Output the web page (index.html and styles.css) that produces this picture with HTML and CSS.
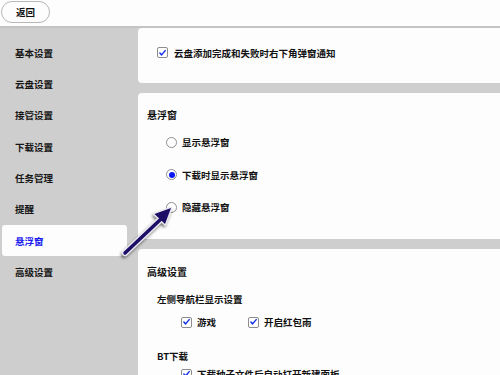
FILE: index.html
```html
<!DOCTYPE html>
<html lang="zh-CN">
<head>
<meta charset="utf-8">
<link rel="stylesheet" href="styles.css">
</head>
<body>
<header class="topbar">
  <button class="back-btn">返回</button>
</header>
<div class="main">
  <nav class="sidebar">
    <div class="nav-item">基本设置</div>
    <div class="nav-item">云盘设置</div>
    <div class="nav-item">接管设置</div>
    <div class="nav-item">下载设置</div>
    <div class="nav-item">任务管理</div>
    <div class="nav-item">提醒</div>
    <div class="nav-item active">悬浮窗</div>
    <div class="nav-item">高级设置</div>
  </nav>
  <section class="content">
    <div class="card card-notify">
      <label class="check-row">
        <span class="cb"><svg viewBox="0 0 11 11" width="11" height="11"><path d="M2.3 5.6 L4.4 7.8 L8.8 2.6" fill="none" stroke="#1230e8" stroke-width="1.8" stroke-linecap="round" stroke-linejoin="round"/></svg></span>
        <span>云盘添加完成和失败时右下角弹窗通知</span>
      </label>
    </div>
    <div class="card card-float">
      <div class="card-title">悬浮窗</div>
      <div class="radio-list">
        <label class="radio-row"><span class="radio"></span><span>显示悬浮窗</span></label>
        <label class="radio-row"><span class="radio on"></span><span>下载时显示悬浮窗</span></label>
        <label class="radio-row"><span class="radio"></span><span>隐藏悬浮窗</span></label>
      </div>
    </div>
    <div class="card card-adv">
      <div class="card-title">高级设置</div>
      <div class="sub-title first">左侧导航栏显示设置</div>
      <div class="check-line">
        <label class="check-item">
          <span class="cb"><svg viewBox="0 0 11 11" width="11" height="11"><path d="M2.3 5.6 L4.4 7.8 L8.8 2.6" fill="none" stroke="#1230e8" stroke-width="1.8" stroke-linecap="round" stroke-linejoin="round"/></svg></span>
          <span>游戏</span>
        </label>
        <label class="check-item">
          <span class="cb"><svg viewBox="0 0 11 11" width="11" height="11"><path d="M2.3 5.6 L4.4 7.8 L8.8 2.6" fill="none" stroke="#1230e8" stroke-width="1.8" stroke-linecap="round" stroke-linejoin="round"/></svg></span>
          <span>开启红包雨</span>
        </label>
      </div>
      <div class="sub-title bt">BT下载</div>
      <div class="check-line second">
        <label class="check-item wide">
          <span class="cb"><svg viewBox="0 0 11 11" width="11" height="11"><path d="M2.3 5.6 L4.4 7.8 L8.8 2.6" fill="none" stroke="#1230e8" stroke-width="1.8" stroke-linecap="round" stroke-linejoin="round"/></svg></span>
          <span>下载种子文件后自动打开新建面板</span>
        </label>
      </div>
    </div>
  </section>
</div>
<svg class="pointer" width="500" height="375" viewBox="0 0 500 375">
  <defs>
    <filter id="glow" x="-20%" y="-20%" width="140%" height="140%">
      <feGaussianBlur in="SourceAlpha" stdDeviation="1.6"/>
      <feOffset dx="-1" dy="1.5" result="b"/>
      <feFlood flood-color="#000" flood-opacity="0.55"/>
      <feComposite in2="b" operator="in"/>
      <feMerge><feMergeNode/><feMergeNode in="SourceGraphic"/></feMerge>
    </filter>
  </defs>
  <g filter="url(#glow)">
    <path d="M125 253 L161 219" stroke="#e8e8f0" stroke-width="6" stroke-linecap="round"/>
    <polygon points="171,208 165,224 154.5,214" fill="#e8e8f0" stroke="#e8e8f0" stroke-width="2.5" stroke-linejoin="round"/>
    <path d="M125 253 L161 219" stroke="#1c0b66" stroke-width="3.5" stroke-linecap="round"/>
    <polygon points="171,208 165,224 154.5,214" fill="#1c0b66"/>
  </g>
</svg>
</body>
</html>
```
FILE: styles.css
```css
* { box-sizing: border-box; }
html, body { margin: 0; padding: 0; }
body {
  width: 500px;
  height: 375px;
  overflow: hidden;
  background: #cecece;
  font-family: "Noto Sans CJK SC", "Noto Sans", sans-serif;
  font-size: 9.5px;
  font-weight: 700;
  color: #111;
  position: relative;
}
.topbar {
  height: 28px;
  background: #fdfdfd;
  border-bottom: 2px solid #c4c4c4;
  padding: 1px 0 0 1px;
}
.back-btn {
  width: 49px;
  height: 22px;
  border: 1px solid #b8b8b8;
  border-radius: 11px;
  background: #fdfdfd;
  font: inherit;
  color: #111;
  padding: 0;
  line-height: 20px;
}
.main {
  display: flex;
  height: 347px;
}
.sidebar {
  width: 138px;
  flex: none;
  padding-top: 9px;
}
.nav-item {
  margin-left: 2px;
  width: 125px;
  height: 31.33px;
  padding-left: 13px;
  display: flex;
  align-items: center;
  color: #161616;
  border-radius: 3px;
}
.nav-item.active {
  background: #fdfdfd;
  color: #1a1cf0;
}
.content {
  flex: 1;
  display: flex;
  flex-direction: column;
  gap: 10px;
  min-height: 0;
}
.card {
  background: #fdfdfd;
  border-radius: 4px 0 0 4px;
  flex-shrink: 0;
}
.card-notify {
  height: 55px;
  padding: 19px 0 0 19px;
}
.check-row, .check-item, .radio-row {
  display: flex;
  align-items: center;
  height: 11px;
  white-space: nowrap;
}
.check-row .cb { margin-right: 6px; }
.cb {
  width: 11px;
  height: 11px;
  border: 1px solid #8c8c8c;
  border-radius: 2px;
  background: #fff;
  display: flex;
  align-items: center;
  justify-content: center;
  flex: none;
}
.cb svg { width: 10px; height: 10px; }
.card-float {
  height: 146px;
  padding: 15px 0 0 9px;
}
.card-title {
  font-size: 10px;
  line-height: 14px;
  height: 14px;
}
.radio-list {
  margin-top: 4px;
  padding-left: 19px;
}
.radio-row {
  height: 32.5px;
}
.radio {
  width: 11px;
  height: 11px;
  border: 1px solid #8e8e8e;
  border-radius: 50%;
  background: #fff;
  margin-right: 5px;
  flex: none;
  display: flex;
  align-items: center;
  justify-content: center;
}
.radio.on::after {
  content: "";
  width: 6px;
  height: 6px;
  border-radius: 50%;
  background: #0a17f2;
}
.card-adv {
  flex: 1 0 auto;
  padding: 16px 0 0 9px;
}
.sub-title {
  padding-left: 10px;
  line-height: 14px;
  height: 14px;
}
.sub-title.first { margin-top: 13px; }
.sub-title.bt { margin-top: 20px; }
.check-line {
  display: flex;
  padding-left: 34px;
  margin-top: 9px;
  height: 14px;
  align-items: center;
}
.check-line.second { margin-top: 4px; }
.check-item { width: 67px; }
.check-item.wide { width: auto; }
.check-item .cb { margin-right: 5px; }
.pointer {
  position: absolute;
  left: 0;
  top: 0;
  pointer-events: none;
}
```
